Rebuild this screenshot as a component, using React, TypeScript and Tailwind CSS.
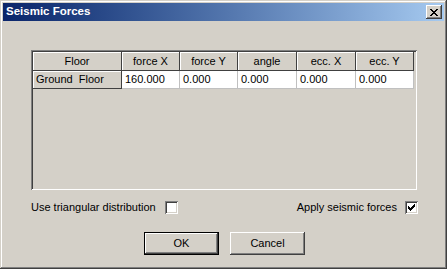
const cols = [
  { label: "Floor", w: "w-[89px]" },
  { label: "force X", w: "w-[58px]" },
  { label: "force Y", w: "w-[58px]" },
  { label: "angle", w: "w-[59px]" },
  { label: "ecc. X", w: "w-[59px]" },
  { label: "ecc. Y", w: "w-[58px]" },
];

const values = ["160.000", "0.000", "0.000", "0.000", "0.000"];

const raised =
  "shadow-[inset_-1px_-1px_#404040,inset_1px_1px_#ffffff,inset_-2px_-2px_#808080,inset_2px_2px_#d4d0c8]";

function Checkbox({ checked }: { checked?: boolean }) {
  return (
    <div className="w-[13px] h-[13px] bg-white shadow-[inset_1px_1px_#808080,inset_-1px_-1px_#ffffff,inset_2px_2px_#404040,inset_-2px_-2px_#d4d0c8] flex items-center justify-center">
      {checked && (
        <svg width="7" height="7" viewBox="0 0 7 7">
          <path d="M0 2h1v1h1v1h1V3h1V2h1V1h1V0h1v3H6v1H5v1H4v1H3v1H2V6H1V5H0z" fill="#000" />
        </svg>
      )}
    </div>
  );
}

function Button({ label, isDefault }: { label: string; isDefault?: boolean }) {
  return (
    <button
      className={`w-[75px] h-[23px] bg-[#d4d0c8] text-[11px] text-black flex items-center justify-center ${
        isDefault
          ? "border border-black shadow-[inset_-1px_-1px_#404040,inset_1px_1px_#ffffff,inset_-2px_-2px_#808080]"
          : raised
      }`}
    >
      {label}
    </button>
  );
}

export default function App() {
  return (
    <div
      className="w-[447px] h-[269px] bg-[#d4d0c8] shadow-[inset_-1px_-1px_#404040,inset_1px_1px_#d4d0c8,inset_-2px_-2px_#808080,inset_2px_2px_#ffffff] p-[3px] flex flex-col"
      style={{ fontFamily: '"Liberation Sans", Arial, sans-serif' }}
    >
      {/* title bar */}
      <div className="h-[18px] bg-gradient-to-r from-[#0a246a] to-[#a6caf0] flex items-center justify-between pl-[3px] pr-[2px]">
        <span className="text-white font-bold text-[11.5px] leading-none">Seismic Forces</span>
        <div className={`w-[16px] h-[14px] bg-[#d4d0c8] ${raised} flex items-center justify-center`}>
          <svg width="8" height="7" viewBox="0 0 8 7">
            <path d="M0 0h2v1h1v1h2V1h1V0h2v1H7v1H6v1H5v1h1v1h1v1h1v1H6V6H5V5H3v1H2v1H0V6h1V5h1V4h1V3H2V2H1V1H0z" fill="#000" />
          </svg>
        </div>
      </div>

      {/* table */}
      <div className="ml-[28px] mt-[29px] w-[386px] h-[140px] shadow-[inset_1px_1px_#808080,inset_-1px_-1px_#ffffff,inset_2px_2px_#404040,inset_-2px_-2px_#d4d0c8] p-[2px]">
        <div className="flex h-[19px]">
          {cols.map((c) => (
            <div
              key={c.label}
              className={`${c.w} shrink-0 bg-[#d4d0c8] border-r border-b border-[#404040] shadow-[inset_1px_1px_#ffffff] flex items-center justify-center text-[11px] text-black`}
            >
              {c.label}
            </div>
          ))}
        </div>
        <div className="flex h-[18px]">
          <div className="w-[89px] shrink-0 bg-[#d4d0c8] border-r border-b border-[#404040] shadow-[inset_1px_1px_#ffffff] flex items-center pl-[3px] text-[11px] text-black">
            Ground&nbsp; Floor
          </div>
          {values.map((v, i) => (
            <div
              key={i}
              className={`${cols[i + 1].w} shrink-0 bg-white border-r border-b border-[#c0c0c0] flex items-center pl-[3px] text-[11px] text-black`}
            >
              {v}
            </div>
          ))}
        </div>
      </div>

      {/* options */}
      <div className="ml-[28px] mr-[26px] mt-[11px] h-[13px] flex items-center justify-between text-[11px] text-black">
        <div className="flex items-center gap-[9px]">
          <span>Use triangular distribution</span>
          <Checkbox />
        </div>
        <div className="flex items-center gap-[8px]">
          <span>Apply seismic forces</span>
          <Checkbox checked />
        </div>
      </div>

      {/* buttons */}
      <div className="mt-[18px] flex justify-center gap-[11px] pl-[2px]">
        <Button label="OK" isDefault />
        <Button label="Cancel" />
      </div>
    </div>
  );
}
